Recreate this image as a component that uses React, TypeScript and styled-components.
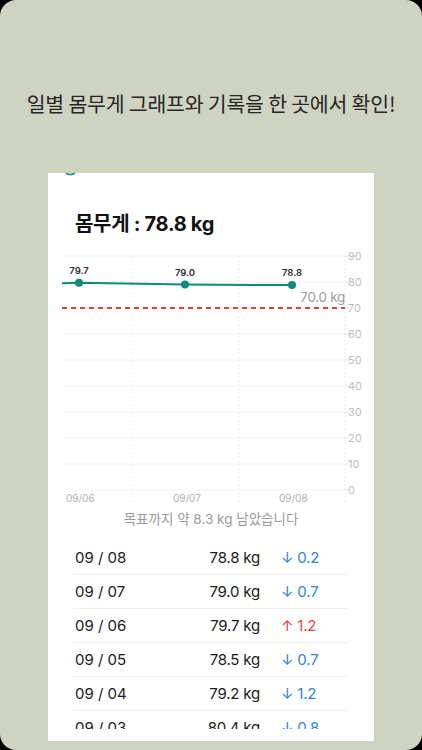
import React from "react";
import styled, { createGlobalStyle } from "styled-components";

const Global = createGlobalStyle`
  html, body { margin: 0; padding: 0; background: #000; }
  body { font-family: Inter, "Noto Sans CJK KR", sans-serif; }
  * { box-sizing: border-box; }
`;

const Screen = styled.div`
  width: 422px;
  height: 750px;
  background: #cfd3c2;
  border-radius: 16px;
  overflow: hidden;
  display: flex;
  flex-direction: column;
  align-items: center;
`;

const Headline = styled.h1`
  margin: 89px 0 0;
  height: 28px;
  font-family: "Noto Sans CJK KR", sans-serif;
  font-weight: 400;
  font-size: 20.5px;
  line-height: 28px;
  color: #262626;
  letter-spacing: -0.2px;
  white-space: nowrap;
`;

const Card = styled.div`
  margin-top: 56px;
  width: 326px;
  height: 568px;
  background: #fff;
  display: flex;
  flex-direction: column;
  overflow: hidden;
`;

const Peek = styled.svg`
  display: block;
  flex: none;
`;

const Title = styled.div`
  margin: 33px 0 0 27px;
  height: 28px;
  font-family: Inter, "Noto Sans CJK KR", sans-serif;
  font-weight: 700;
  font-size: 20px;
  line-height: 28px;
  color: #111;
  letter-spacing: -0.3px;
`;

const Chart = styled.svg`
  display: block;
  margin-top: 10px;
  flex: none;
`;

const Goal = styled.div`
  margin-top: 4px;
  text-align: center;
  font-family: Inter, "Noto Sans CJK KR", sans-serif;
  font-size: 13.5px;
  line-height: 20px;
  color: #9a9a9a;
`;

const List = styled.div`
  margin: 11px 26px 0 25px;
  height: 189px;
  overflow: hidden;
  display: flex;
  flex-direction: column;
`;

const Row = styled.div<{ first?: boolean }>`
  flex: none;
  height: 34px;
  display: grid;
  grid-template-columns: 1fr 72px 88px;
  align-items: center;
  padding-left: 2px;
  border-top: ${(p) => (p.first ? "none" : "1px solid #f0f0f0")};
  font-family: Inter, "Noto Sans CJK KR", sans-serif;
  font-size: 15px;
  color: #1a1a1a;
`;

const Weight = styled.span`
  text-align: right;
  letter-spacing: -0.2px;
`;

const Delta = styled.span<{ up?: boolean }>`
  padding-left: 21px;
  color: ${(p) => (p.up ? "#e2463b" : "#2f86d9")};
  letter-spacing: -0.2px;
`;

const rows = [
  { d: "09 / 08", w: "78.8 kg", up: false, v: "0.2" },
  { d: "09 / 07", w: "79.0 kg", up: false, v: "0.7" },
  { d: "09 / 06", w: "79.7 kg", up: true, v: "1.2" },
  { d: "09 / 05", w: "78.5 kg", up: false, v: "0.7" },
  { d: "09 / 04", w: "79.2 kg", up: false, v: "1.2" },
  { d: "09 / 03", w: "80.4 kg", up: false, v: "0.8" },
];

// chart coords: page y - 248, page x - 48
const yOf = (v: number) => 490 - v * 2.6 - 248;
const pts = [
  { x: 31, v: 79.7, l: "79.7" },
  { x: 137, v: 79.0, l: "79.0" },
  { x: 244, v: 78.8, l: "78.8" },
];

function WeightChart() {
  const ticks = [90, 80, 70, 60, 50, 40, 30, 20, 10, 0];
  const linePath =
    `M14 ${yOf(79.5).toFixed(1)} ` +
    pts.map((p) => `L${p.x} ${yOf(p.v).toFixed(1)}`).join(" ");
  return (
    <Chart width={326} height={257} viewBox="0 0 326 257">
      {ticks.map((t) => (
        <g key={t}>
          <line x1={14} x2={297} y1={yOf(t)} y2={yOf(t)} stroke="#f2f2f2" strokeWidth={1} />
          <line x1={297} x2={301} y1={yOf(t)} y2={yOf(t)} stroke="#e2e2e2" strokeWidth={1} />
          <text
            x={300}
            y={yOf(t) + 4}
            fontSize={11}
            fill="#bdbdbd"
            fontFamily="Inter, sans-serif"
          >
            {t}
          </text>
        </g>
      ))}
      {[84, 191, 297].map((x) => (
        <line
          key={x}
          x1={x}
          x2={x}
          y1={yOf(90)}
          y2={255}
          stroke="#ececec"
          strokeWidth={1}
          strokeDasharray="2 2"
        />
      ))}
      <line
        x1={14}
        x2={297}
        y1={yOf(70)}
        y2={yOf(70)}
        stroke="#e0413a"
        strokeWidth={2}
        strokeDasharray="5 4"
      />
      <text
        x={297}
        y={54}
        textAnchor="end"
        fontSize={13.5}
        letterSpacing={-0.3}
        fill="#9d9d9d"
        fontFamily="Inter, sans-serif"
      >
        70.0 kg
      </text>
      <path d={linePath} fill="none" stroke="#118a7e" strokeWidth={2} />
      {pts.map((p) => (
        <g key={p.x}>
          <circle cx={p.x} cy={yOf(p.v)} r={4} fill="#118a7e" />
          <text
            x={p.x}
            y={yOf(p.v) - 9}
            textAnchor="middle"
            fontSize={9.5}
            fontWeight={600}
            fill="#2b2b2b"
            fontFamily="Inter, sans-serif"
          >
            {p.l}
          </text>
        </g>
      ))}
      {[
        { x: 18, l: "09/06" },
        { x: 125, l: "09/07" },
        { x: 231, l: "09/08" },
      ].map((d) => (
        <text
          key={d.l}
          x={d.x}
          y={254}
          fontSize={10}
          fill="#b0b0b0"
          fontFamily="Inter, sans-serif"
        >
          {d.l}
        </text>
      ))}
    </Chart>
  );
}

export default function App() {
  return (
    <>
      <Global />
      <Screen>
        <Headline>일별 몸무게 그래프와 기록을 한 곳에서 확인!</Headline>
        <Card>
          <Peek width={326} height={4} viewBox="0 0 326 4">
            <path d="M17 -2 A6 6 0 0 0 28 -2" fill="none" stroke="#1a9a8c" strokeWidth={2} />
          </Peek>
          <Title>몸무게 : 78.8 kg</Title>
          <WeightChart />
          <Goal>목표까지 약 8.3 kg 남았습니다</Goal>
          <List>
            {rows.map((r, i) => (
              <Row key={r.d} first={i === 0}>
                <span>{r.d}</span>
                <Weight>{r.w}</Weight>
                <Delta up={r.up}>
                  {r.up ? "↑" : "↓"} {r.v}
                </Delta>
              </Row>
            ))}
          </List>
        </Card>
      </Screen>
    </>
  );
}
